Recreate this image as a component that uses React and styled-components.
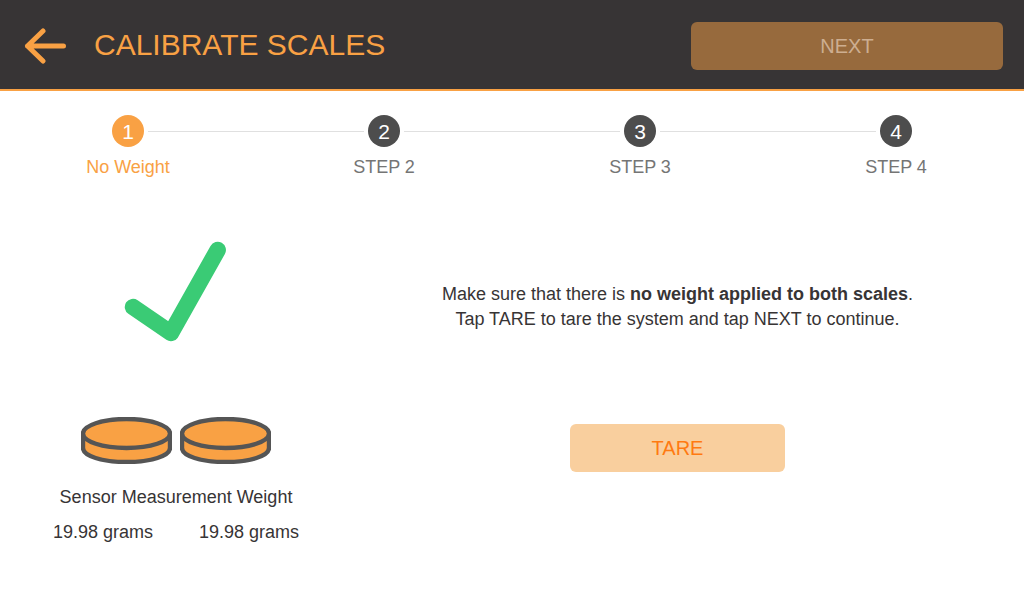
import React from "react";
import styled, { createGlobalStyle } from "styled-components";

const ORANGE = "#f9a144";
const DARK = "#373435";

const GlobalStyle = createGlobalStyle`
  html, body {
    margin: 0;
    padding: 0;
    background: #fff;
  }
  body {
    font-family: "Liberation Sans", Arial, sans-serif;
  }
`;

const Page = styled.div`
  width: 1024px;
  height: 600px;
  overflow: hidden;
`;

const Header = styled.header`
  box-sizing: border-box;
  height: 91px;
  display: flex;
  align-items: center;
  padding: 3px 21px 0 24px;
  background: ${DARK};
  border-bottom: 2px solid ${ORANGE};
`;

const BackIcon = styled.svg`
  width: 42px;
  height: 36px;
  display: block;
`;

const Title = styled.h1`
  flex: 1;
  margin: 0 0 2px 28px;
  font-size: 30px;
  font-weight: 400;
  line-height: 36px;
  color: ${ORANGE};
`;

const Button = styled.button`
  display: block;
  height: 48px;
  padding: 0;
  border: 0;
  border-radius: 6px;
  font-family: inherit;
  font-size: 20px;
  text-align: center;
`;

const NextButton = styled(Button)`
  width: 312px;
  background: #976a3d;
  color: #cdae91;
`;

const TareButton = styled(Button)`
  width: 215px;
  background: #f9cf9e;
  color: #ff7a11;
`;

const Stepper = styled.ol`
  display: grid;
  grid-template-columns: repeat(4, 256px);
  margin: 0;
  padding: 24px 0 0;
  list-style: none;
`;

const Step = styled.li`
  display: flex;
  flex-direction: column;
  align-items: center;
  position: relative;

  &:not(:last-child)::after {
    content: "";
    position: absolute;
    top: 16px;
    left: 148px;
    width: 216px;
    height: 1px;
    background: #e0e0e0;
  }
`;

const StepDot = styled.span`
  box-sizing: border-box;
  width: 32px;
  height: 32px;
  padding-top: 2px;
  display: flex;
  align-items: center;
  justify-content: center;
  border-radius: 50%;
  background: ${(props) => (props.$active ? ORANGE : "#4d4d4d")};
  color: #fff;
  font-size: 21px;
`;

const StepLabel = styled.span`
  margin-top: 9px;
  font-size: 18px;
  line-height: 22px;
  color: ${(props) => (props.$active ? ORANGE : "#757575")};
`;

const Content = styled.main`
  display: grid;
  grid-template-columns: 352px 1fr;
  padding: 60px 21px 0 0;
`;

const SensorColumn = styled.section`
  display: flex;
  flex-direction: column;
  align-items: center;
`;

const CheckIcon = styled.svg`
  width: 104px;
  height: 104px;
  display: block;
`;

const ScaleRow = styled.div`
  display: flex;
  gap: 8px;
  margin-top: 75px;
`;

const ScaleIcon = styled.svg`
  width: 91px;
  height: 47px;
  display: block;
`;

const SensorTitle = styled.div`
  margin-top: 22px;
  font-size: 18px;
  line-height: 22px;
  color: ${DARK};
`;

const ReadingRow = styled.div`
  display: flex;
  gap: 46px;
  margin-top: 13px;
  font-size: 18px;
  line-height: 22px;
  color: ${DARK};
`;

const InstructionColumn = styled.section`
  display: flex;
  flex-direction: column;
  align-items: center;
  padding-top: 44px;
`;

const Instructions = styled.p`
  margin: 0;
  font-size: 18px;
  line-height: 25px;
  text-align: center;
  color: ${DARK};
`;

const TareWrap = styled.div`
  margin-top: 92px;
`;

const steps = [
  { n: 1, label: "No Weight", active: true },
  { n: 2, label: "STEP 2" },
  { n: 3, label: "STEP 3" },
  { n: 4, label: "STEP 4" },
];

function Scale() {
  return (
    <ScaleIcon viewBox="0 0 91 47">
      <path
        d="M2 16.5 V31 C2 39 21 45 45.5 45 C70 45 89 39 89 31 V16.5 Z"
        fill={ORANGE}
        stroke="#555"
        strokeWidth="4.4"
        strokeLinejoin="round"
      />
      <ellipse cx="45.5" cy="16.5" rx="43.5" ry="14.5" fill={ORANGE} stroke="#555" strokeWidth="4.4" />
    </ScaleIcon>
  );
}

export default function App() {
  return (
    <Page>
      <GlobalStyle />
      <Header>
        <BackIcon viewBox="0 0 42 36" fill="none" stroke={ORANGE} strokeWidth="5" strokeLinecap="round" strokeLinejoin="round">
          <path d="M39.5 18 H3.5 M19 3 L3.5 18 L19 33" />
        </BackIcon>
        <Title>CALIBRATE SCALES</Title>
        <NextButton>NEXT</NextButton>
      </Header>
      <Stepper>
        {steps.map((step) => (
          <Step key={step.n}>
            <StepDot $active={step.active}>{step.n}</StepDot>
            <StepLabel $active={step.active}>{step.label}</StepLabel>
          </Step>
        ))}
      </Stepper>
      <Content>
        <SensorColumn>
          <CheckIcon viewBox="0 0 104 104" fill="none" stroke="#3acb75" strokeWidth="16.5" strokeLinecap="round" strokeLinejoin="round">
            <path d="M9 69 L47 95 L93.7 12" />
          </CheckIcon>
          <ScaleRow>
            <Scale />
            <Scale />
          </ScaleRow>
          <SensorTitle>Sensor Measurement Weight</SensorTitle>
          <ReadingRow>
            <span>19.98 grams</span>
            <span>19.98 grams</span>
          </ReadingRow>
        </SensorColumn>
        <InstructionColumn>
          <Instructions>
            Make sure that there is <strong>no weight applied to both scales</strong>.
            <br />
            Tap TARE to tare the system and tap NEXT to continue.
          </Instructions>
          <TareWrap>
            <TareButton>TARE</TareButton>
          </TareWrap>
        </InstructionColumn>
      </Content>
    </Page>
  );
}
